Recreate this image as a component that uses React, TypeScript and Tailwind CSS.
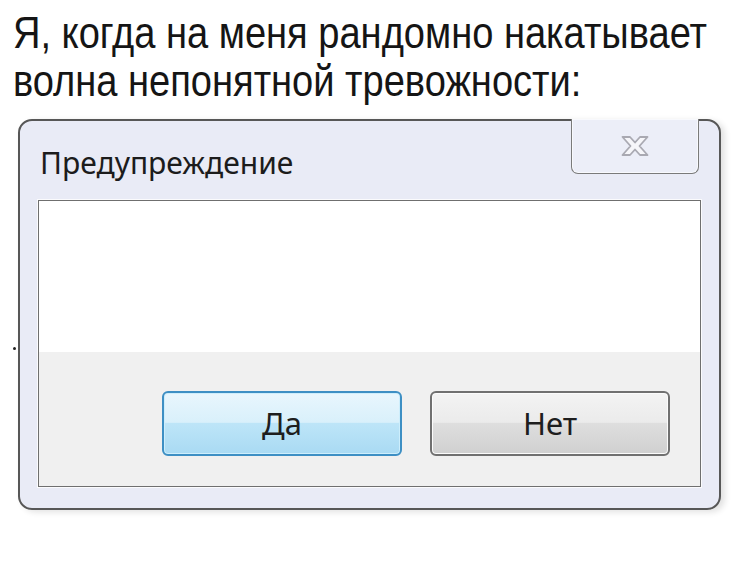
import React from "react";

function CloseX() {
  return (
    <svg width="30" height="22" viewBox="0 0 30 22">
      <path
        d="M2.5 2 H10 L15 7.5 L20 2 H27.5 L19.5 11 L27.5 20 H20 L15 14.5 L10 20 H2.5 L10.5 11 Z"
        fill="#f6f6fa"
        stroke="#a9a9b2"
        strokeWidth="1.8"
        strokeLinejoin="round"
      />
    </svg>
  );
}

export default function App() {
  return (
    <div className="relative w-[750px] h-[567px] bg-white overflow-hidden">
      <div
        className="pl-[15px] pt-[9px] text-[44px] leading-[48px] text-[#151515] origin-left scale-x-[0.865] w-[900px]"
        style={{ fontFamily: '"Liberation Sans", Arial, sans-serif' }}
      >
        <div className="whitespace-nowrap">Я, когда на меня рандомно накатывает</div>
        <div className="whitespace-nowrap">волна непонятной тревожности:</div>
      </div>

      <div className="absolute left-[13px] top-[347px] w-[3px] h-[3px] rounded-full bg-[#222]" />

      <div className="ml-[18px] mt-[14px] w-[703px] h-[391px] border-2 border-[#575757] rounded-[14px] bg-[#e9ebf6] shadow-[4px_2px_6px_rgba(0,0,0,0.12)] flex flex-col">
        <div className="flex justify-between items-start h-[79px]">
          <div
            className="pl-[20px] pt-[24px] text-[30px] leading-[36px] text-[#1c1c1c]"
            style={{ fontFamily: '"Noto Sans", "Open Sans", sans-serif' }}
          >
            Предупреждение
          </div>
          <div className="mr-[20px] -mt-[2px] w-[128px] h-[55px] border border-t-0 border-[#7a7a7a] rounded-b-[7px] bg-[#eceef8] flex items-center justify-center shadow-[inset_0_0_0_1px_#f8f9fd]">
            <CloseX />
          </div>
        </div>
        <div className="mx-[18px] h-[287px] border border-[#6f6f6f] shadow-[0_0_0_1px_#fbfbfd] flex flex-col">
          <div className="h-[151px] bg-white" />
          <div className="flex-1 bg-[#f0f0f0] pt-[39px] pl-[123px] flex gap-[28px]">
            <div
              className="w-[240px] h-[65px] rounded-[6px] border-2 border-[#3d8fc4] bg-[linear-gradient(#e8f6fd_0%,#d9f0fb_48%,#bde5f8_50%,#a9daf3_100%)] shadow-[inset_0_0_0_1px_#cdeefc] flex items-center justify-center text-[31px] text-[#1e1e1e]"
              style={{ fontFamily: '"Noto Sans", "Open Sans", sans-serif' }}
            >
              Да
            </div>
            <div
              className="w-[240px] h-[65px] rounded-[6px] border-2 border-[#707070] bg-[linear-gradient(#f3f3f3_0%,#ebebeb_48%,#dedede_50%,#d0d0d0_100%)] shadow-[inset_0_0_0_1px_#fbfbfb] flex items-center justify-center text-[31px] text-[#1e1e1e]"
              style={{ fontFamily: '"Noto Sans", "Open Sans", sans-serif' }}
            >
              Нет
            </div>
          </div>
        </div>
      </div>
    </div>
  );
}
